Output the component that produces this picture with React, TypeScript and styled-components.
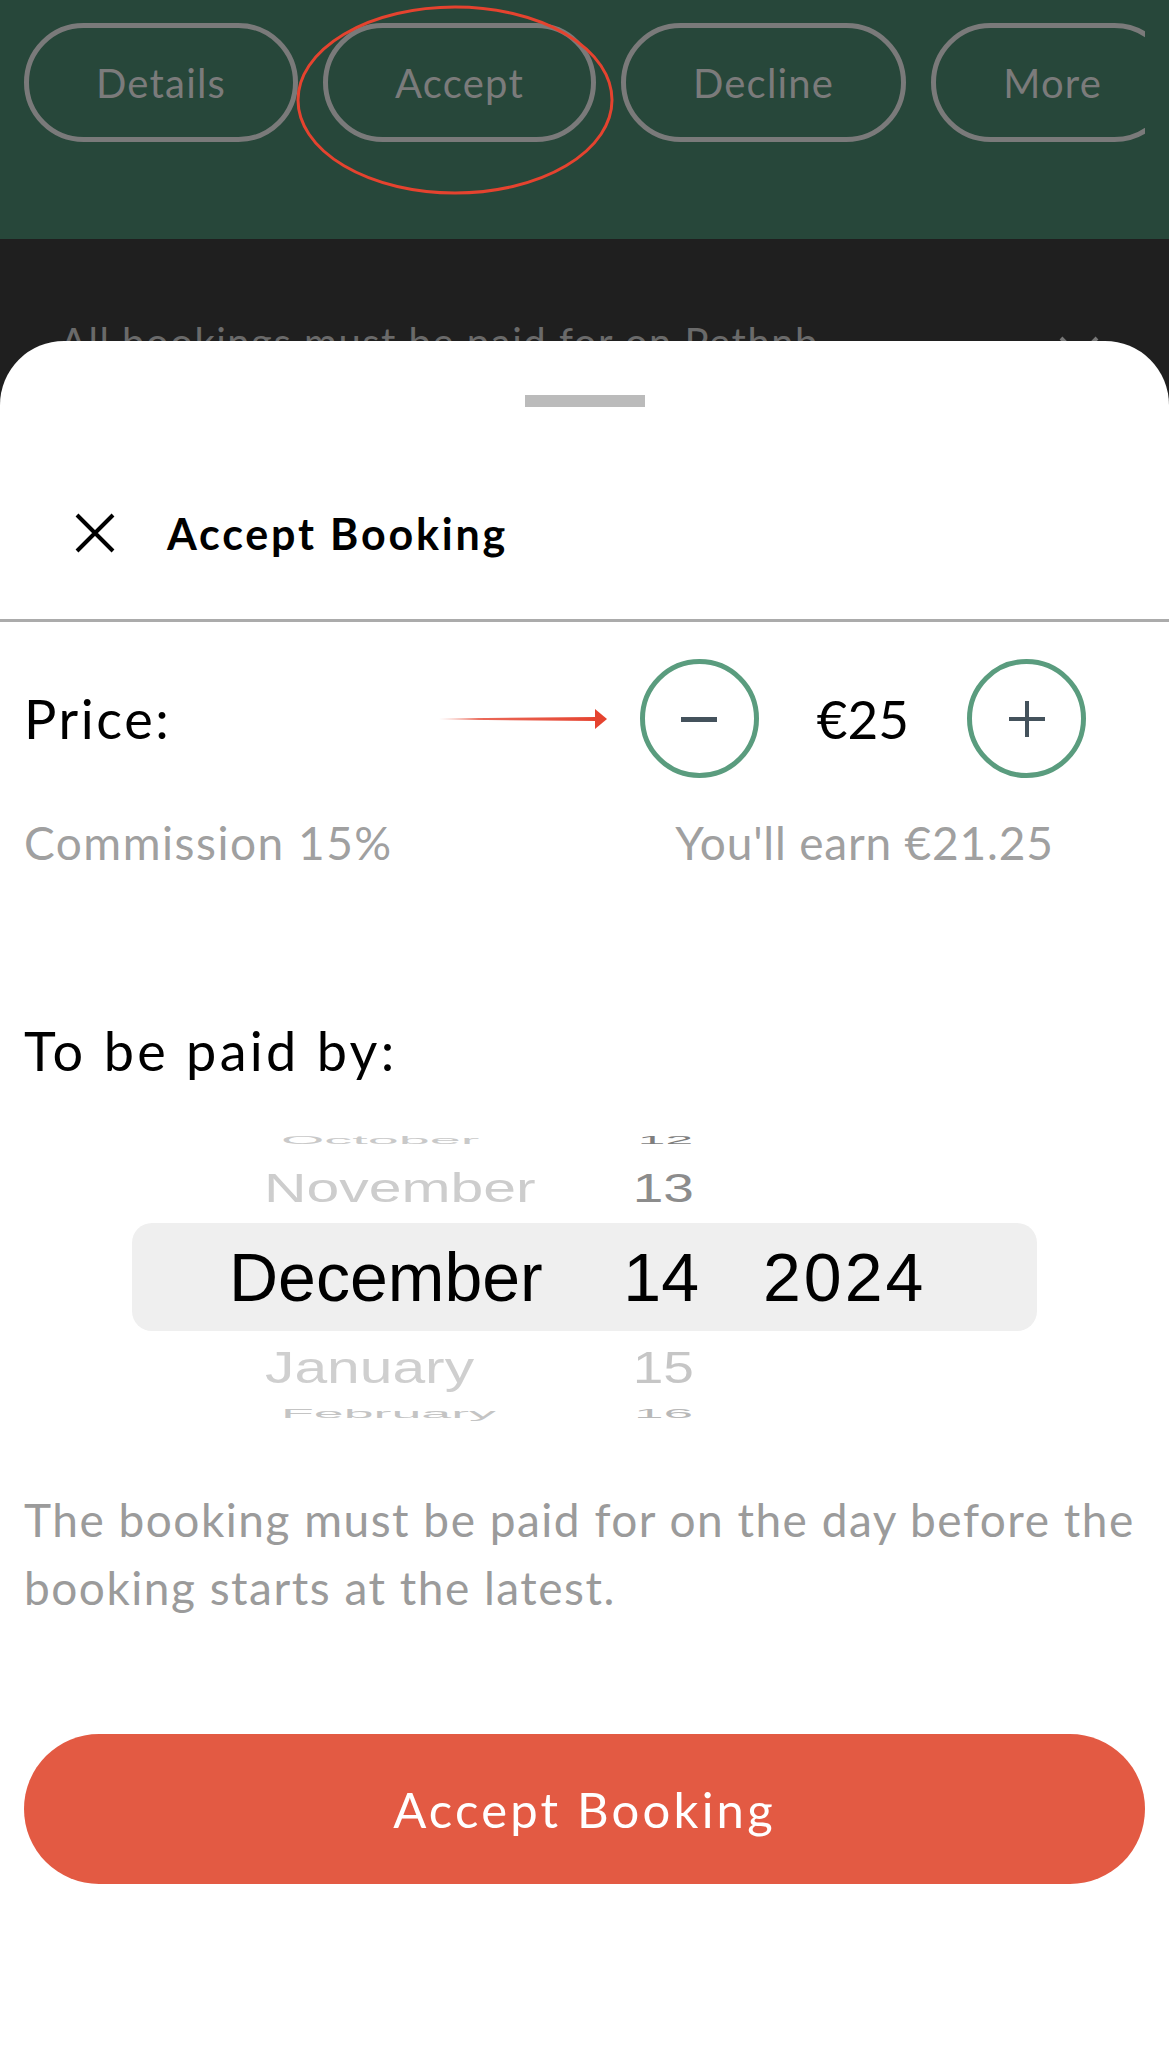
import styled, { createGlobalStyle } from 'styled-components';

const GlobalStyle = createGlobalStyle`
	html, body {
		margin: 0;
		padding: 0;
	}
	body {
		font-family: 'Lato', 'Noto Sans', sans-serif;
		background: #1f1f1f;
	}
`;

const months = [
	{ month: 'October', day: '12', mdx: 52, msx: 0.82, msy: 0.17, mcolor: '#c9c9c9', ddx: -6, dsx: 0.73, dsy: 0.17, dcolor: '#7e7e7e', height: 24 },
	{ month: 'November', day: '13', mdx: 35, msx: 0.866, msy: 0.61, mcolor: '#cdcdcd', ddx: -5, dsx: 0.81, dsy: 0.61, dcolor: '#8c8c8c', height: 71 },
	{ month: 'December', day: '14', year: '2024', mdx: 0, msx: 1, msy: 1, mcolor: '#000', ddx: 0, dsx: 1, dsy: 1, dcolor: '#000', height: 108, selected: true },
	{ month: 'January', day: '15', mdx: 36, msx: 0.864, msy: 0.65, mcolor: '#cfcfcf', ddx: -5, dsx: 0.81, dsy: 0.65, dcolor: '#c6c6c6', height: 72 },
	{ month: 'February', day: '16', mdx: 52, msx: 0.79, msy: 0.18, mcolor: '#c4c4c4', ddx: -6, dsx: 0.78, dsy: 0.18, dcolor: '#b8b8b8', height: 22 },
];

const actions = ['Details', 'Accept', 'Decline', 'More'];

const App = () => {
	return (
		<>
			<GlobalStyle />
			<Page>
				<TopBar>
					<PillRow>
						{actions.map((label) => (
							<Pill key={label}>{label}</Pill>
						))}
					</PillRow>
					<Highlight viewBox='0 0 320 192' width='320' height='192'>
						<ellipse cx='160' cy='96' rx='157' ry='93' fill='none' stroke='#e5432f' strokeWidth='3' />
					</Highlight>
				</TopBar>
				<NoticeBand>
					<span>All bookings must be paid for on Pethnb</span>
					<Chevron viewBox='0 0 42 24' width='42' height='24'>
						<path d='M3 3 L21 21 L39 3' fill='none' stroke='#777' strokeWidth='4' />
					</Chevron>
				</NoticeBand>
				<Sheet>
					<Handle />
					<SheetHeader>
						<svg viewBox='0 0 40 40' width='40' height='40'>
							<path d='M2 2 L38 38 M38 2 L2 38' stroke='#000' strokeWidth='4' />
						</svg>
						<SheetTitle>Accept Booking</SheetTitle>
					</SheetHeader>
					<Content>
						<PriceRow>
							<Label>Price:</Label>
							<Spacer />
							<Arrow viewBox='0 0 170 22' width='170' height='22'>
								<defs>
									<linearGradient id='shaft' x1='0' x2='1' y1='0' y2='0'>
										<stop offset='0' stopColor='#e5432f' stopOpacity='0' />
										<stop offset='0.25' stopColor='#e5432f' stopOpacity='0.8' />
										<stop offset='1' stopColor='#e5432f' />
									</linearGradient>
								</defs>
								<polygon points='0,10.5 158,9 158,13 0,11.5' fill='url(#shaft)' />
								<polygon points='156,1 168,11 156,21' fill='#e5432f' />
							</Arrow>
							<Stepper>
								<RoundButton>
									<svg viewBox='0 0 38 38' width='38' height='38'>
										<rect x='1' y='17' width='36' height='5' fill='#44525c' />
									</svg>
								</RoundButton>
								<PriceValue>€25</PriceValue>
								<RoundButton>
									<svg viewBox='0 0 38 38' width='38' height='38'>
										<rect x='1' y='17' width='36' height='4' fill='#44525c' />
										<rect x='17' y='1' width='4' height='36' fill='#44525c' />
									</svg>
								</RoundButton>
							</Stepper>
						</PriceRow>
						<EarningsRow>
							<Commission>Commission 15%</Commission>
							<Earn>You'll earn €21.25</Earn>
						</EarningsRow>
						<PaidByLabel>To be paid by:</PaidByLabel>
						<Picker>
							{months.map((row) => (
								<PickerRow key={row.month} $height={row.height} $selected={!!row.selected}>
									<MonthCell
										style={{
											color: row.mcolor,
											transform: `translateX(${row.mdx}px) scale(${row.msx}, ${row.msy})`,
										}}
									>
										{row.month}
									</MonthCell>
									<DayCell
										style={{
											color: row.dcolor,
											transform: `translateX(${row.ddx}px) scale(${row.dsx}, ${row.dsy})`,
										}}
									>
										{row.day}
									</DayCell>
									<YearCell>{row.year}</YearCell>
								</PickerRow>
							))}
						</Picker>
						<Note>
							The booking must be paid for on the day before the booking starts at the latest.
						</Note>
						<PrimaryButton>Accept Booking</PrimaryButton>
					</Content>
				</Sheet>
			</Page>
		</>
	);
};

const Page = styled.div`
	min-height: 100vh;
	display: flex;
	flex-direction: column;
	background: #1f1f1f;
`;

const TopBar = styled.div`
	position: relative;
	height: 239px;
	background: #27473a;
`;

const PillRow = styled.div`
	display: flex;
	gap: 25px;
	margin: 0 24px;
	padding-top: 23px;
	overflow: hidden;
`;

const Pill = styled.div`
	flex: none;
	box-sizing: border-box;
	height: 119px;
	padding: 0 67px;
	border: 5px solid #7a7a7a;
	border-radius: 60px;
	display: flex;
	align-items: center;
	font-size: 40px;
	letter-spacing: 1.2px;
	color: #7b7b7b;
`;

const Highlight = styled.svg`
	position: absolute;
	left: 295px;
	top: 4px;
`;

const NoticeBand = styled.div`
	box-sizing: border-box;
	height: 102px;
	padding: 79px 69px 0 60px;
	overflow: hidden;
	display: flex;
	justify-content: space-between;
	align-items: flex-start;
	font-size: 40px;
	line-height: 48px;
	letter-spacing: 1.5px;
	color: #6a6a6a;
`;

const Chevron = styled.svg`
	margin-top: 17px;
`;

const Sheet = styled.div`
	flex: 1;
	background: #fff;
	border-radius: 64px 64px 0 0;
	padding-top: 54px;
`;

const Handle = styled.div`
	width: 120px;
	height: 12px;
	margin: 0 auto;
	background: #bbb;
`;

const SheetHeader = styled.div`
	display: flex;
	align-items: center;
	gap: 52px;
	height: 100px;
	padding: 76px 0 36px 75px;
	border-bottom: 3px solid #ababab;
`;

const SheetTitle = styled.div`
	font-size: 43px;
	font-weight: 700;
	letter-spacing: 2.8px;
	line-height: 1;
	color: #000;
`;

const Content = styled.div`
	padding: 0 24px;
`;

const PriceRow = styled.div`
	display: flex;
	align-items: center;
	margin-top: 37px;
	padding-right: 59px;
`;

const Label = styled.div`
	font-size: 54px;
	letter-spacing: 2.6px;
	line-height: 1;
	color: #000;
`;

const Spacer = styled.div`
	flex: 1;
`;

const Arrow = styled.svg`
	margin-right: 31px;
`;

const Stepper = styled.div`
	display: flex;
	align-items: center;
	gap: 58px;
`;

const RoundButton = styled.div`
	box-sizing: border-box;
	width: 119px;
	height: 119px;
	border: 5px solid #5a9c7e;
	border-radius: 50%;
	display: flex;
	align-items: center;
	justify-content: center;
`;

const PriceValue = styled.div`
	min-width: 91px;
	text-align: center;
	font-size: 53px;
	color: #000;
`;

const EarningsRow = styled.div`
	display: grid;
	grid-template-columns: 1fr 443px;
	margin-top: 37px;
	padding-right: 59px;
	font-size: 46px;
	line-height: 56px;
	color: #a0a0a0;
`;

const Commission = styled.span`
	letter-spacing: 1.5px;
`;

const Earn = styled.span`
	text-align: center;
	letter-spacing: 0.8px;
`;

const PaidByLabel = styled.div`
	margin-top: 148px;
	font-size: 54px;
	line-height: 64px;
	letter-spacing: 3.3px;
	color: #000;
`;

const Picker = styled.div`
	margin: 45px 108px 0;
	font-family: 'Liberation Sans', Arial, sans-serif;
	font-size: 68px;
`;

interface PickerRowProps {
	$height: number;
	$selected: boolean;
}

const PickerRow = styled.div<PickerRowProps>`
	display: grid;
	grid-template-columns: 330px 140px 1fr;
	grid-template-rows: ${(props) => props.$height}px;
	align-items: center;
	height: ${(props) => props.$height}px;
	line-height: ${(props) => props.$height}px;
	padding-left: 97px;
	border-radius: 20px;
	background: ${(props) => (props.$selected ? '#efefef' : 'transparent')};
	white-space: nowrap;
`;

const MonthCell = styled.div`
	transform-origin: left center;
`;

const DayCell = styled.div`
	text-align: right;
	transform-origin: right center;
`;

const YearCell = styled.div`
	padding-left: 64px;
	letter-spacing: 3px;
	color: #000;
`;

const Note = styled.p`
	margin: 61px 0 0;
	font-size: 46px;
	line-height: 68px;
	letter-spacing: 1.5px;
	color: #9b9b9b;
`;

const PrimaryButton = styled.div`
	margin-top: 112px;
	height: 150px;
	border-radius: 75px;
	background: #e35a43;
	color: #fff;
	font-size: 49px;
	letter-spacing: 3.2px;
	display: flex;
	align-items: center;
	justify-content: center;
`;

export default App;
